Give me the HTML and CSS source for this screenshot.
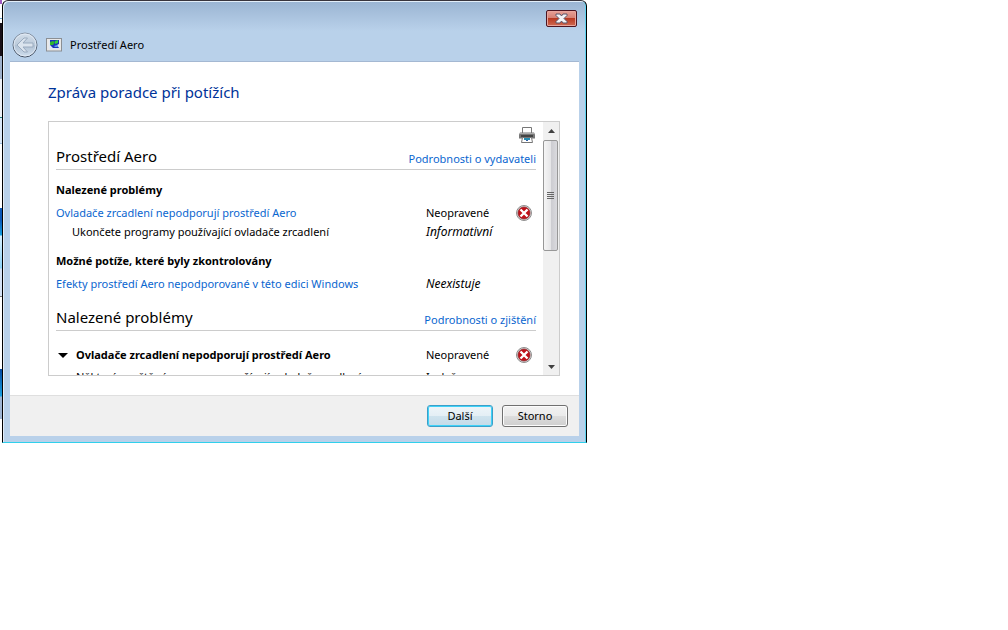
FILE: index.html
```html
<!DOCTYPE html>
<html lang="cs">
<head>
<meta charset="utf-8">
<title>Prostředí Aero</title>
<link rel="stylesheet" href="styles.css">
</head>
<body>
<div class="desktop" aria-hidden="true"></div>
<main class="window">
  <header class="titlebar">
    <div class="caption">
      <button class="close" aria-label="Zavřít">
        <svg width="13" height="11" viewBox="0 0 13 11"><path d="M1 1h4l1.500 2L8 1h4v1.500L9 5.500l3 3V10H8L6.500 8 5 10H1V8.500l3-3-3-3z" fill="#f4f4f6" stroke="#5a5468"/></svg>
      </button>
    </div>
    <div class="nav">
      <button class="back" aria-label="Zpět">
        <svg width="26" height="26" viewBox="0 0 26 26">
          <defs>
            <linearGradient id="orb" x1="0" y1="0" x2="0" y2="1"><stop offset="0" stop-color="#d3deea"/><stop offset=".48" stop-color="#bccbdb"/><stop offset=".5" stop-color="#b0c1d3"/><stop offset="1" stop-color="#cfdfee"/></linearGradient>
            <linearGradient id="rim" x1="0" y1="0" x2="0" y2="1"><stop offset="0" stop-color="#8a97a8"/><stop offset="1" stop-color="#3f4b5c"/></linearGradient>
          </defs>
          <circle cx="13" cy="13" r="12" fill="url(#orb)" stroke="url(#rim)"/>
          <circle cx="13" cy="13" r="11" fill="none" stroke="#e6eef7" stroke-opacity=".8"/>
          <path d="M5 13l7-7h3.500l-4.500 5h10v4H11l4.500 5H12z" fill="#dbe4ee" stroke="#9aabbf"/>
        </svg>
      </button>
      <svg class="app-icon" width="16" height="14" viewBox="0 0 16 14">
        <rect x=".5" y=".5" width="15" height="12.500" fill="#e8e8e8" stroke="#8b8f94"/>
        <rect x="3" y="2" width="10" height="9" fill="#dfe8f5"/>
        <path d="M4 2h9v4l-2 1 2 3H7L4 7z" fill="#1a35b8"/>
        <path d="M4 4l3-1 2 1-2 3H4z" fill="#2fb52f"/><path d="M9 3l3-1v3l-3 1z" fill="#27d23a"/>
        <path d="M8 8l3-1 1 2H9z" fill="#5d9df0"/>
      </svg>
      <span>Prostředí Aero</span>
    </div>
  </header>
  <section class="page">
    <h1>Zpráva poradce při potížích</h1>
    <div class="report">
      <div class="content">
        <button class="print" aria-label="Tisk">
          <svg width="16" height="16" viewBox="0 0 16 16">
            <path d="M3.500 6V.5h9V6" fill="#fff" stroke="#777"/>
            <path d="M1 5.500h14l1 2v4H0v-4z" fill="#777"/><path d="M1 6h14v1H1z" fill="#aaa"/><path d="M2 8h12v2H2z" fill="#444"/>
            <path d="M3.500 10.500h9l1 5h-11z" fill="#fff" stroke="#777"/><path d="M5 11h6v2H5z" fill="#258bb0"/><path d="M7 13h2v1H7z" fill="#2b5fa8"/>
          </svg>
        </button>
        <div class="heading"><h2>Prostředí Aero</h2><a href="#">Podrobnosti o vydavateli</a></div>
        <h3>Nalezené problémy</h3>
        <div class="row"><a href="#">Ovladače zrcadlení nepodporují prostředí Aero</a><span>Neopravené</span>
          <svg class="err" width="16" height="16" viewBox="0 0 16 16"><circle cx="8" cy="8" r="7.500" fill="#dcdcdc" stroke="#8e8e8e"/><circle cx="8" cy="8" r="6" fill="#c01018" stroke="#8d2a2e" stroke-width=".8"/><path d="M4.500 4.500l7 7M11.500 4.500l-7 7" stroke="#fff" stroke-width="2.400"/></svg></div>
        <div class="row sub"><span class="indent">Ukončete programy používající ovladače zrcadlení</span><em>Informativní</em></div>
        <h3 class="checked">Možné potíže, které byly zkontrolovány</h3>
        <div class="row"><a href="#">Efekty prostředí Aero nepodporované v této edici Windows</a><em>Neexistuje</em></div>
        <div class="heading second"><h2>Nalezené problémy</h2><a href="#">Podrobnosti o zjištění</a></div>
        <div class="row detail"><button class="toggle" aria-expanded="true"><svg width="10" height="5" viewBox="0 0 10 5"><path d="M0 0h10L5 5z"/></svg>Ovladače zrcadlení nepodporují prostředí Aero</button><span>Neopravené</span>
          <svg class="err" width="16" height="16" viewBox="0 0 16 16"><circle cx="8" cy="8" r="7.500" fill="#dcdcdc" stroke="#8e8e8e"/><circle cx="8" cy="8" r="6" fill="#c01018" stroke="#8d2a2e" stroke-width=".8"/><path d="M4.500 4.500l7 7M11.500 4.500l-7 7" stroke="#fff" stroke-width="2.400"/></svg></div>
        <div class="row more"><span class="deep">Některé spuštěné programy používají ovladač zrcadlení</span><span>Izolač</span></div>
      </div>
      <div class="scrollbar" aria-hidden="true">
        <svg class="arrow" width="7" height="4" viewBox="0 0 7 4"><path d="M0 4L3.500 0 7 4z" fill="#404040"/></svg>
        <div class="thumb"><i></i><i></i><i></i><i></i></div>
        <svg class="arrow down" width="7" height="4" viewBox="0 0 7 4"><path d="M0 0L3.500 4 7 0z" fill="#404040"/></svg>
      </div>
    </div>
  </section>
  <footer class="actions">
    <button class="btn primary">Další</button>
    <button class="btn">Storno</button>
  </footer>
</main>
</body>
</html>
```
FILE: styles.css
```css
* { box-sizing: border-box; }
body {
  margin: 0;
  display: flex;
  align-items: flex-start;
  background: #fff;
  color: #000;
  font: 11px/16px "Noto Sans", "Open Sans", sans-serif;
}
button { font: inherit; color: inherit; padding: 0; border: 0; background: none; }
svg { display: block; flex: none; }
h1, h2, h3 { margin: 0; font-weight: 400; }
a { color: #0a66cf; text-decoration: none; }
em { font-size: 12px; }

.desktop {
  align-self: stretch;
  flex: none;
  width: 2px;
  background: linear-gradient(#a05ac0 0 4px, #fff 4px 18px, #6fa6cc 18px 19px, #fff 19px 23px, #181018 23px 56px, #9fb2cc 56px 79px, #eef1f6 79px 117px, #208080 117px 118px, #dce9f8 118px 143px, #9fc0e0 143px 144px, #fff 144px 208px, #0b58b8 208px 220px, #16a0e0 235px, #d8f0ff 236px, #8fd4f8 268px, #d5e3f6 269px 296px, #777 296px 297px, #fff 297px 369px, #0648a0 369px, #18a0e0 396px, #9fb6d4 397px 419px, #fff 419px);
}
.window {
  width: 100%;
  max-width: 585px;
  padding: 0 7px 6px;
  border: 1px solid #000;
  border-top-color: #38343c;
  border-bottom-color: #2fd0ec;
  border-radius: 6px 6px 0 0;
  box-shadow: inset 1px 1px #e3eef9, inset -1px 0 #5fd4f0;
  background: linear-gradient(#9ab4d2, #b9d1ea 30px, #b9d1ea);
}
.titlebar { height: 61px; border-bottom: 1px solid #a4b8d2; }
.caption { display: flex; justify-content: flex-end; padding: 9px 2px 0 0; }
.close {
  display: grid;
  place-items: center;
  width: 31px;
  height: 17px;
  border: 1px solid #4c1420;
  border-radius: 2px;
  box-shadow: inset 0 0 0 1px #e8a59c;
  background: linear-gradient(#e8a096, #d58073 48%, #b93a22 50%, #cf6a52);
}
.nav { display: flex; align-items: center; padding: 5px 2px 0; }
.app-icon { margin: 0 8px; }

.page { padding: 18px 19px 19px 38px; background: #fff; }
h1 { color: #039; font-size: 15px; line-height: 24px; margin-bottom: 17px; }
.report { display: flex; height: 255px; border: 1px solid #ccc; overflow: hidden; }
.content { flex: 1; min-width: 0; padding: 4px 7px 0; }
.print { display: block; margin: 1px 1px 0 auto; }
.heading {
  display: flex;
  justify-content: space-between;
  align-items: flex-end;
  height: 27px;
  padding-bottom: 2px;
  border-bottom: 1px solid #ccc;
}
.heading h2 { font-size: 15px; line-height: 22px; }
h3 { font-size: 11px; font-weight: 700; margin: 12px 0 7px; }
.checked { margin-top: 13px; }
.row { display: grid; grid-template-columns: 1fr 90px 20px; align-items: center; min-height: 16px; white-space: nowrap; }
.sub { margin-top: 3px; }
.indent { padding-left: 16px; }
.second { margin-top: 12px; }
.detail { margin-top: 16px; }
.toggle { display: flex; align-items: center; gap: 8px; padding-left: 2px; font-weight: 700; }
.more { margin-top: 6px; }
.deep { padding-left: 20px; }
.scrollbar {
  flex: none;
  display: flex;
  flex-direction: column;
  align-items: center;
  width: 16px;
  padding: 7px 0 6px;
  background: #f0f0f0;
}
.thumb {
  display: flex;
  flex-direction: column;
  align-items: center;
  align-self: flex-start;
  justify-content: center;
  gap: 1px;
  width: 15px;
  height: 111px;
  margin-top: 7px;
  border: 1px solid #979797;
  border-radius: 2px;
  background: linear-gradient(90deg, #f5f5f5, #e6e6e8 50%, #cbcbd0 52%, #dadade);
}
.thumb i { width: 7px; height: 1px; background: #666; }
.down { margin-top: auto; }

.actions {
  display: flex;
  justify-content: flex-end;
  gap: 9px;
  padding: 9px 11px 9px;
  border-top: 1px solid #dfdfdf;
  background: #f0f0f0;
}
.btn {
  width: 66px;
  height: 22px;
  border: 1px solid #707070;
  border-radius: 3px;
  box-shadow: inset 0 0 0 1px #fcfcfc;
  background: linear-gradient(#f2f2f2, #ebebeb 48%, #dddddd 50%, #cfcfcf);
}
.primary {
  border-color: #3c9fc8;
  box-shadow: inset 0 0 0 1px #3fd2f8;
  background: linear-gradient(#eef5f9, #e4eff5 48%, #cfe3ee 50%, #c4dbe8);
}
```
